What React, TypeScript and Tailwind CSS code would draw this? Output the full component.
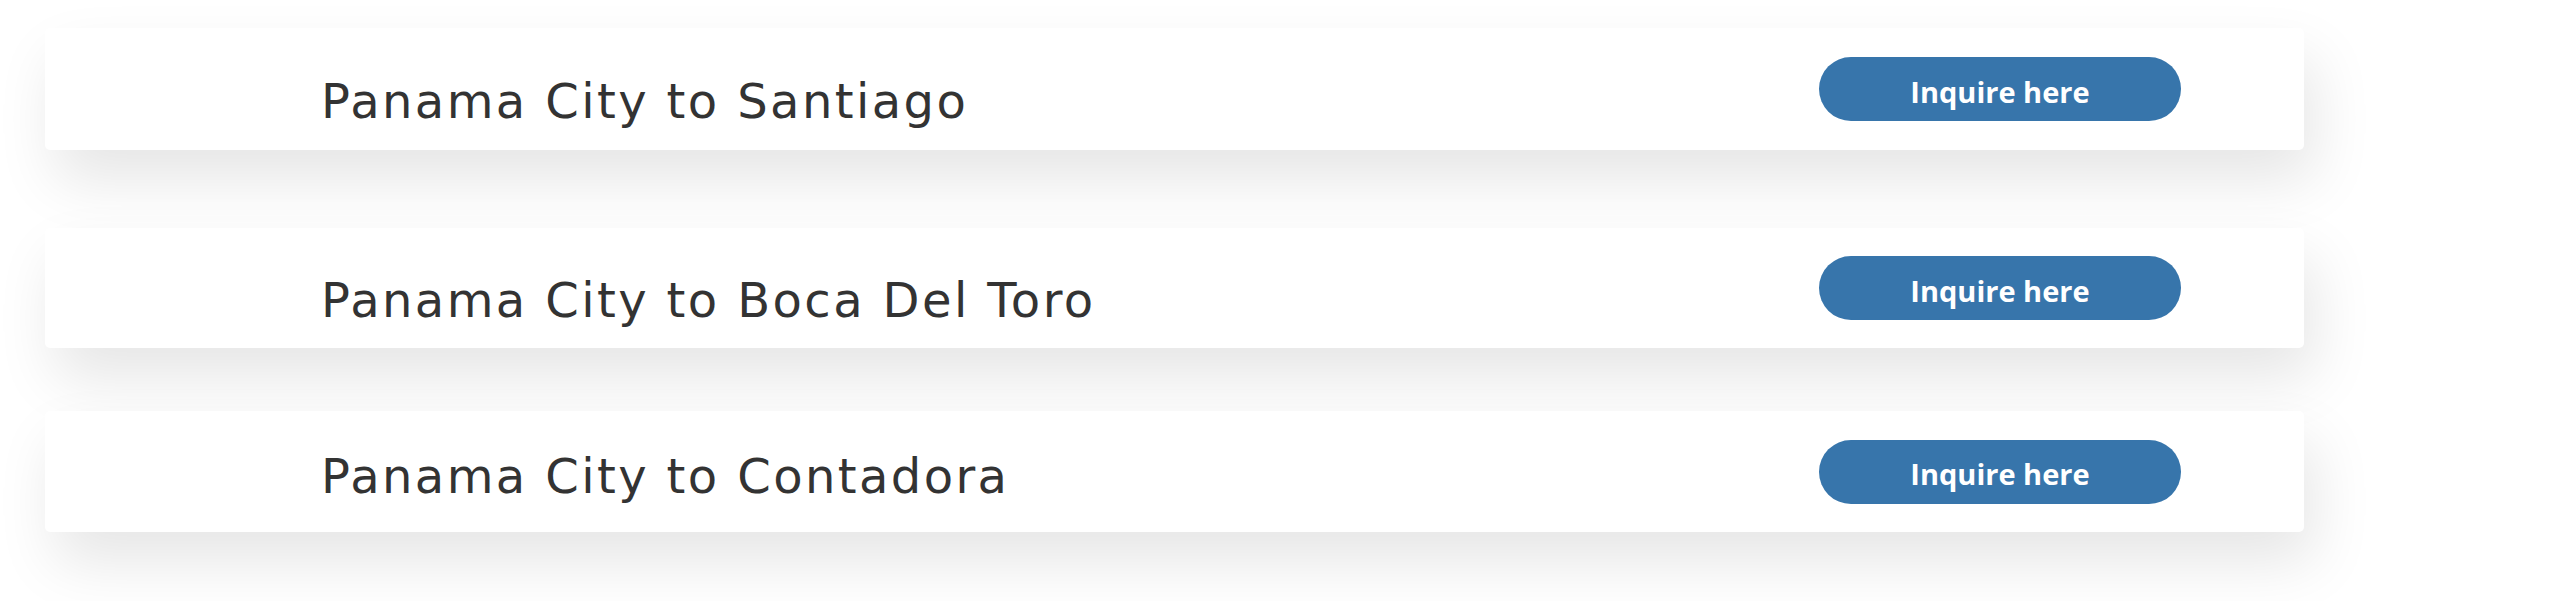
import React from 'react';

interface Route {
  id: string;
  title: string;
  wrap: string;
  nudge: string;
}

const routes: Route[] = [
  { id: 'santiago', title: 'Panama City to Santiago', wrap: 'mt-[28px] h-[122px]', nudge: 'pt-6' },
  { id: 'bocas', title: 'Panama City to Boca Del Toro', wrap: 'mt-[78px] h-[120px]', nudge: 'pt-6' },
  { id: 'contadora', title: 'Panama City to Contadora', wrap: 'mt-[63px] h-[121px]', nudge: 'pt-2' },
];

const InquireButton: React.FC = () => (
  <button
    type="button"
    className="w-[362px] h-[64px] pt-[5px] rounded-full bg-[#3775ab] text-white text-[29px] font-bold flex items-center justify-center"
    style={{ fontFamily: '"Open Sans", Lato, sans-serif' }}
  >
    Inquire here
  </button>
);

const RouteCard: React.FC<{ route: Route }> = ({ route }) => (
  <div
    className={`${route.wrap} ml-[45px] w-[2259px] bg-white rounded-[5px] shadow-[10px_30px_60px_rgba(0,0,0,0.1)] flex items-center justify-between pl-[276px] pr-[123px]`}
  >
    <span
      className={`${route.nudge} text-[48px] tracking-[2.4px] text-[#333333] leading-none`}
      style={{ fontFamily: '"DejaVu Sans", sans-serif' }}
    >
      {route.title}
    </span>
    <InquireButton />
  </div>
);

export default function App() {
  return (
    <div className="w-[2560px] h-[601px] bg-white overflow-hidden flex flex-col">
      {routes.map((r) => (
        <RouteCard key={r.id} route={r} />
      ))}
    </div>
  );
}
